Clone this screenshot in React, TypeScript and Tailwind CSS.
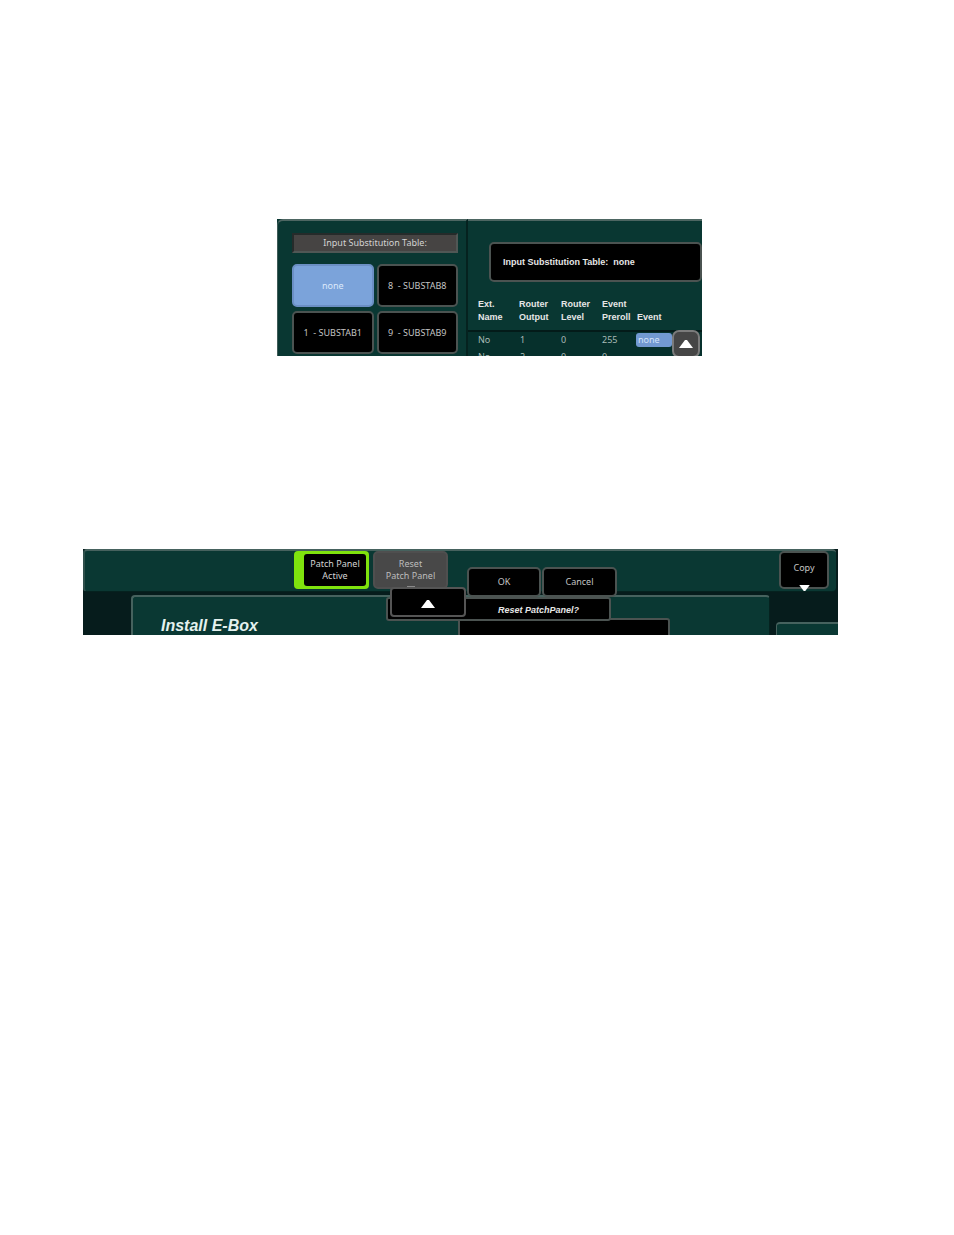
import React from 'react';
import clsx from 'clsx';

interface PanelButtonProps {
  children: React.ReactNode;
  selected?: boolean;
  className?: string;
}

const PanelButton: React.FC<PanelButtonProps> = ({ children, selected, className }) => (
  <button
    type="button"
    className={clsx(
      'rounded-[5px] border-2 text-center',
      selected
        ? 'border-[#6b8fc4] bg-[#7ba3da] text-[#dce9fb]'
        : 'border-[#4b5351] bg-black text-[#c4c4c4]',
      className
    )}
  >
    {children}
  </button>
);

interface TriangleProps {
  down?: boolean;
  className?: string;
}

const Triangle: React.FC<TriangleProps> = ({ down, className }) => (
  <svg viewBox="0 0 14 8" aria-hidden="true" className={className}>
    <path d={down ? 'M0 0H14L8 8H6Z' : 'M0 8L6 0H8L14 8Z'} fill="#ffffff" />
  </svg>
);

const tables = [
  { label: 'none', selected: true },
  { label: '8  - SUBSTAB8' },
  { label: '1  - SUBSTAB1' },
  { label: '9  - SUBSTAB9' },
];

const rows = [
  { name: 'No', output: '1', level: '0', preroll: '255', event: 'none' },
  { name: 'No', output: '2', level: '0', preroll: '0', event: '' },
];

const SubstitutionTables = () => (
  <section className="relative flex h-[137px] overflow-hidden bg-[#093732]">
    <div className="w-[191px] shrink-0 rounded-tl-[6px] border-t-2 border-l border-r-2 border-t-[#4d6662] border-l-[#3f5b57] border-r-[#05221f] pt-3 pr-2 pl-[14px]">
      <h2 className="h-5 border-2 border-t-[#252b2a] border-r-[#505755] border-b-[#505755] border-l-[#252b2a] bg-[#464443] text-center leading-4 text-[#d2d2d2]">
        Input Substitution Table:
      </h2>
      <div className="mt-[11px] grid grid-cols-2 gap-x-[3px] gap-y-1">
        {tables.map((t) => (
          <PanelButton key={t.label} selected={t.selected} className="h-[43px] whitespace-pre">
            {t.label}
          </PanelButton>
        ))}
      </div>
    </div>

    <div className="min-w-0 grow border-t-2 border-[#4d6662]">
      <div className="mt-[21px] ml-[21px] h-10 rounded-[5px] border-2 border-[#4b5351] bg-black pl-3 font-['Liberation_Sans',sans-serif] leading-9 font-bold whitespace-pre text-[#e6e6e6]">
        Input Substitution Table:  none
      </div>
      <table className="mt-4 w-full table-fixed border-collapse text-left">
        <thead className="font-['Liberation_Sans',sans-serif] leading-[13px] text-[#e6e6e6]">
          <tr className="align-bottom">
            <th className="w-[51px] pb-[6px] pl-[10px]">Ext.<br />Name</th>
            <th className="w-[42px] pb-[6px]">Router<br />Output</th>
            <th className="w-[41px] pb-[6px]">Router<br />Level</th>
            <th className="w-[34px] pb-[6px]">Event<br />Preroll</th>
            <th className="pb-[6px] pl-px">Event</th>
          </tr>
        </thead>
        <tbody className="bg-[#06302c] leading-[14px] text-[#a9bbb7]">
          {rows.map((r, i) => (
            <tr key={i} className={clsx(i === 0 && 'border-t-2 border-[#031b19]')}>
              <td className="pt-px pb-[2px] pl-[10px]">{r.name}</td>
              <td className="pt-px pb-[2px] pl-px">{r.output}</td>
              <td className="pt-px pb-[2px]">{r.level}</td>
              <td className="pt-px pb-[2px]">{r.preroll}</td>
              <td className="pt-px pb-[2px]">
                {r.event && (
                  <button type="button" className="block w-9 rounded-[3px] bg-[#7299d1] pl-[2px] text-left text-[#d5e4fa]">
                    {r.event}
                  </button>
                )}
              </td>
            </tr>
          ))}
        </tbody>
      </table>
    </div>

    <button
      type="button"
      aria-label="Scroll up"
      className="absolute right-[2px] bottom-[-2px] flex h-7 w-7 items-center justify-center rounded-[7px] border-2 border-[#7b7b7b] bg-[#464646]"
    >
      <Triangle className="h-2 w-[14px]" />
    </button>
  </section>
);

const PatchPanel = () => (
  <section className="relative h-[86px] overflow-hidden bg-[#061c1c]">
    <header className="mr-[2px] flex h-[43px] items-start rounded-[4px] border-t-2 border-b border-l-2 border-t-[#46625e] border-b-[#05221f] border-l-[#2f4f4b] bg-[#0a3833] pl-[209px]">
      <button
        type="button"
        className="h-[38px] w-[75px] rounded-[4px] bg-[#7fe30d] py-[3px] pr-[3px] pl-[10px] leading-3 text-[#d4d4d4]"
      >
        <span className="block h-full rounded-[3px] bg-black pt-1">
          Patch Panel
          <br />
          Active
        </span>
      </button>
      <button
        type="button"
        className="relative ml-1 h-[38px] w-[75px] rounded-[5px] border-2 border-[#4f4f4f] bg-[#484848] leading-3 text-[#bcbcbc]"
      >
        Reset
        <br />
        Patch Panel
        <span className="absolute bottom-0 left-8 h-px w-2 bg-[#8a8a8a]" />
      </button>
      <div className="relative mr-[7px] ml-auto">
        <PanelButton className="h-[38px] w-[50px] pb-1">Copy</PanelButton>
        <Triangle down className="absolute bottom-[-2px] left-5 h-[6px] w-[11px]" />
      </div>
    </header>

    <div className="mt-[3px] flex items-start">
      <div className="ml-12 h-10 grow rounded-t-[4px] border-t-2 border-r border-l-2 border-t-[#46625e] border-r-[#05221f] border-l-[#46625e] bg-[#0a3833]">
        <div className="flex">
          <h2 className="mt-[19px] ml-7 w-[297px] font-['Liberation_Sans',sans-serif] text-base leading-5 font-bold text-[#e4f1ee] italic">
            Install E-Box
          </h2>
          <div className="mt-[21px] h-7 w-[212px] rounded-t-[3px] border-2 border-[#4b5351] bg-black" />
        </div>
      </div>
      <div className="mt-[27px] ml-[6px] h-5 w-[62px] rounded-tl-[4px] border-t-2 border-l border-[#46625e] bg-[#0a3833]" />
    </div>

    <div role="dialog" aria-label="Reset PatchPanel?" className="absolute top-[18px] left-[303px] w-[231px]">
      <div className="flex justify-end gap-px">
        <PanelButton className="h-[30px] w-[74px]">OK</PanelButton>
        <PanelButton className="h-[30px] w-[75px]">Cancel</PanelButton>
      </div>
      <p className="mr-[6px] h-6 rounded-[3px] border-2 border-[#4b5351] bg-black pl-[110px] font-['Liberation_Sans',sans-serif] leading-[22px] font-bold text-[#e6e6e6] italic">
        Reset PatchPanel?
      </p>
      <button
        type="button"
        aria-label="Close"
        className="absolute top-5 left-1 flex h-[30px] w-[76px] items-center justify-center rounded-[4px] border-2 border-[#555555] bg-black pt-[3px]"
      >
        <Triangle className="h-2 w-[14px]" />
      </button>
    </div>
  </section>
);

const App = () => (
  <main className="min-h-screen bg-white pt-[219px] pr-[116px] pl-[83px] font-['Noto_Sans',sans-serif] text-[9px]">
    <div className="mr-[136px] ml-[194px]">
      <SubstitutionTables />
    </div>
    <div className="mt-[193px]">
      <PatchPanel />
    </div>
  </main>
);

export default App;
